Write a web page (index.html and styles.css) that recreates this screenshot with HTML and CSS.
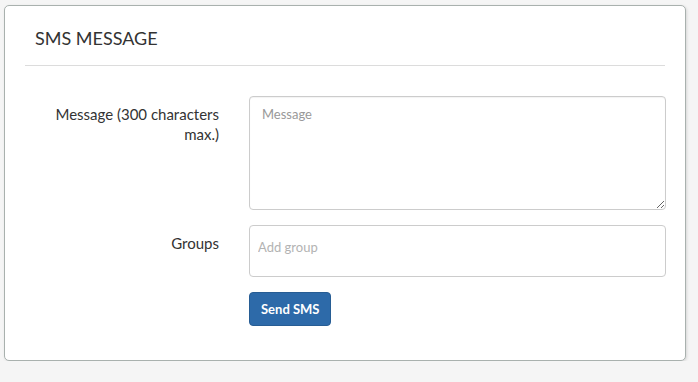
FILE: index.html
```html
<!DOCTYPE html>
<html lang="en">
<head>
    <meta charset="UTF-8">
    <meta name="viewport" content="width=device-width, initial-scale=1.0">
    <title>SMS Message</title>
    <link rel="stylesheet" href="styles.css">
</head>
<body>
    <div class="card">
        <div class="card-header">
            <h3>SMS MESSAGE</h3>
        </div>
        <form class="form-grid">
            <label class="control-label" for="message">Message (300 characters max.)</label>
            <textarea id="message" class="form-control" placeholder="Message"></textarea>

            <label class="control-label" for="groups">Groups</label>
            <div class="tag-input">
                <input type="text" id="groups" placeholder="Add group">
            </div>

            <div></div>
            <div>
                <button type="button" class="btn-primary">Send SMS</button>
            </div>
        </form>
    </div>
</body>
</html>
```

FILE: styles.css
```css
body {
    margin: 0;
    font-family: Lato, 'Open Sans', sans-serif;
    font-size: 14px;
    line-height: 20px;
    color: #333;
    background-color: #f5f5f5;
}
.card {
    box-sizing: border-box;
    width: 682px;
    height: 356px;
    margin: 5px 0 0 4px;
    background-color: #fff;
    border: 1px solid #a9b1ae;
    border-radius: 5px;
    box-shadow: 1px 1px 3px rgba(0,0,0,0.12);
}
.card-header {
    margin: 0 20px;
    padding: 22px 10px 17px;
    border-bottom: 1px solid #dcdcdc;
}
.card-header h3 {
    margin: 0;
    font-size: 18px;
    font-weight: normal;
    line-height: 20px;
    color: #333;
}
.form-grid {
    display: grid;
    grid-template-columns: 194px 417px;
    column-gap: 30px;
    row-gap: 15px;
    margin: 0 20px;
    padding-top: 30px;
}
.control-label {
    padding-top: 8px;
    font-size: 15px;
    text-align: right;
}
.form-control {
    box-sizing: border-box;
    width: 100%;
    height: 114px;
    padding: 7px 12px;
    font-family: inherit;
    font-size: 13px;
    line-height: 20px;
    border: 1px solid #ccc;
    border-radius: 4px;
    box-shadow: inset 0 1px 1px rgba(0,0,0,0.05);
}
.form-control::placeholder {
    color: #999;
}
.tag-input {
    box-sizing: border-box;
    height: 52px;
    padding: 11px 8px 0;
    border: 1px solid #ccc;
    border-radius: 4px;
}
.tag-input input {
    display: block;
    border: none;
    outline: none;
    padding: 0;
    font-family: inherit;
    font-size: 13px;
    line-height: 20px;
    height: 20px;
    width: 100%;
}
.tag-input input::placeholder {
    color: #b3b3b3;
}
.btn-primary {
    padding: 6px 11px;
    font-family: inherit;
    font-size: 13px;
    font-weight: bold;
    line-height: 20px;
    color: #fff;
    background-color: #2d6aa9;
    border: 1px solid #275d94;
    border-radius: 4px;
    cursor: pointer;
}
```
